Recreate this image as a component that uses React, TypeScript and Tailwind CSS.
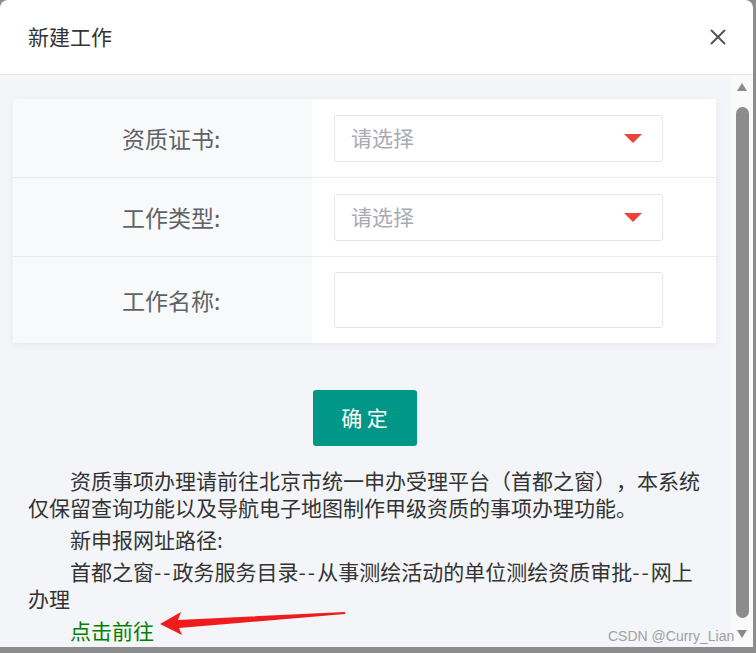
import React from 'react';
import { X } from 'lucide-react';

// 新建工作 弹窗

const cjk = "font-['Noto_Sans_CJK_SC','Microsoft_YaHei',sans-serif]";

type Row = { label: string; kind: 'select' | 'input' };

const rows: Row[] = [
  { label: '资质证书:', kind: 'select' },
  { label: '工作类型:', kind: 'select' },
  { label: '工作名称:', kind: 'input' },
];

const Caret: React.FC = () => (
  <svg width="18" height="9" viewBox="0 0 18 9" className="shrink-0">
    <polygon points="0,0 18,0 9,9" fill="#e8453c" />
  </svg>
);

const FormRow: React.FC<{ row: Row; last: boolean }> = ({ row, last }) => (
  <div className={`flex ${last ? 'h-[86px]' : 'h-[79px] border-b border-[#ebecef]'}`}>
    <div className="w-[299px] bg-[#f8f9fb] flex items-center pl-[109px] text-[23px] text-[#606266]">
      {row.label}
    </div>
    <div className="flex-1 flex items-center pl-[22px]">
      {row.kind === 'select' ? (
        <div className="w-[329px] h-[47px] border border-[#e4e6ea] rounded-[3px] flex items-center justify-between pl-[16px] pr-[20px]">
          <span className="text-[21px] text-[#a8abb2]">请选择</span>
          <Caret />
        </div>
      ) : (
        <div className="w-[329px] h-[56px] border border-[#e4e6ea] rounded-[3px]" />
      )}
    </div>
  </div>
);

const Scrollbar: React.FC = () => (
  <div className="w-[22px] bg-[#fafafa] flex flex-col items-center pt-[8px]">
    <svg width="10" height="8" viewBox="0 0 10 8">
      <polygon points="5,0 10,8 0,8" fill="#8a8a8a" />
    </svg>
    <div className="w-[13px] h-[511px] mt-[16px] rounded-full bg-[#8c8c8c]" />
    <svg width="10" height="8" viewBox="0 0 10 8" className="mt-[12px]">
      <polygon points="0,0 10,0 5,8" fill="#8a8a8a" />
    </svg>
  </div>
);

const Dash: React.FC = () => <span className="tracking-[2px]">--</span>;

const App: React.FC = () => {
  return (
    <div className={`relative w-[756px] h-[653px] bg-[#8c8c8c] overflow-hidden ${cjk}`}>
      <div className="w-[753px] h-[647px] bg-white rounded-t-[8px] flex flex-col overflow-hidden">
        {/* header */}
        <div className="h-[75px] shrink-0 border-b border-[#e8e8e8] flex items-center justify-between pl-[28px] pr-[22px]">
          <span className="text-[21px] text-[#333]">新建工作</span>
          <X size={26} strokeWidth={1.8} color="#555" />
        </div>

        {/* body */}
        <div className="flex-1 flex min-h-0">
          <div className="flex-1 bg-[#f4f5f8] overflow-hidden pt-[24px]">
            <div className="ml-[13px] w-[703px] bg-white shadow-[0_2px_8px_rgba(0,0,0,0.06)]">
              {rows.map((r, i) => (
                <FormRow key={r.label} row={r} last={i === rows.length - 1} />
              ))}
            </div>

            <div className="ml-[13px] w-[703px] flex justify-center mt-[47px]">
              <button className="w-[104px] h-[56px] bg-[#009688] rounded-[3px] text-white text-[21px]">
                确 定
              </button>
            </div>

            <div className="ml-[28px] w-[674px] mt-[21px] text-[21px] leading-[27px] text-[#333] [text-spacing-trim:space-all]">
              <p className="indent-[2em] mb-[5px]">
                资质事项办理请前往北京市统一申办受理平台（首都之窗），本系统仅保留查询功能以及导航电子地图制作甲级资质的事项办理功能。
              </p>
              <p className="indent-[2em] mb-[5px]">新申报网址路径:</p>
              <p className="indent-[2em] mb-[5px]">
                首都之窗<Dash />政务服务目录<Dash />从事测绘活动的单位测绘资质审批<Dash />网上办理
              </p>
              <p className="indent-[2em] text-[#008000]">点击前往</p>
            </div>
          </div>
          <Scrollbar />
        </div>
      </div>

      {/* red annotation arrow */}
      <svg className="absolute left-0 top-0 pointer-events-none" width="756" height="653">
        <polygon
          points="160,624 181,612 178,620 345,612 345,614 179,628 182,635"
          fill="#ee1c1c"
        />
      </svg>

      <span className="absolute left-[608px] top-[626px] text-[14px] text-[#a0a0a0] font-['Liberation_Sans',sans-serif]">
        CSDN @Curry_Lian
      </span>
    </div>
  );
};

export default App;
